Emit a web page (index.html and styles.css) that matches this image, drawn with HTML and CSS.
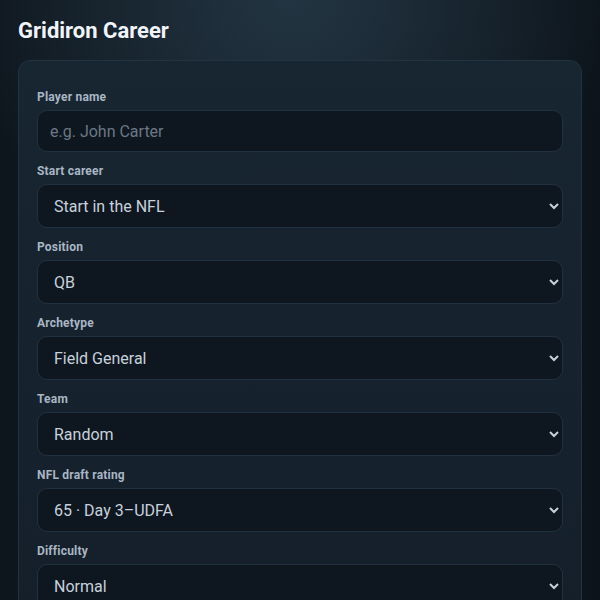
FILE: index.html
```html
<!DOCTYPE html>
<html lang="en">
<head>
<meta charset="utf-8">
<title>Gridiron Career</title>
<link rel="stylesheet" href="styles.css">
</head>
<body>
<h1 class="title">Gridiron Career</h1>
<form class="card">
  <div class="field">
    <label class="label" for="name">Player name</label>
    <input class="control input" id="name" type="text" placeholder="e.g. John Carter">
  </div>
  <div class="field">
    <label class="label" for="start">Start career</label>
    <select class="control select" id="start"><option>Start in the NFL</option><option>Start in College</option></select>
  </div>
  <div class="field">
    <label class="label" for="pos">Position</label>
    <select class="control select" id="pos"><option>QB</option><option>RB</option><option>WR</option></select>
  </div>
  <div class="field">
    <label class="label" for="arch">Archetype</label>
    <select class="control select" id="arch"><option>Field General</option><option>Scrambler</option></select>
  </div>
  <div class="field">
    <label class="label" for="team">Team</label>
    <select class="control select" id="team"><option>Random</option></select>
  </div>
  <div class="field">
    <label class="label" for="draft">NFL draft rating</label>
    <select class="control select" id="draft"><option>65 · Day 3–UDFA</option></select>
  </div>
  <div class="field">
    <label class="label" for="diff">Difficulty</label>
    <select class="control select" id="diff"><option>Normal</option><option>Hard</option></select>
  </div>
</form>
</body>
</html>
```
FILE: styles.css
```css
html {
  background: #0d141b;
  color-scheme: dark;
}
body {
  margin: 0;
  padding: 0 18px 40px;
  min-height: 100vh;
  font-family: Roboto, "Liberation Sans", sans-serif;
  background:
    radial-gradient(ellipse 340px 260px at 290px 0px, rgba(40, 60, 74, 0.75), rgba(40, 60, 74, 0) 100%),
    linear-gradient(90deg, #0e161d 0%, #121d27 50%, #0c131a 100%);
  color: #e8eef4;
}
.title {
  margin: 0;
  padding: 18px 0 17px;
  font-size: 22px;
  line-height: 25px;
  font-weight: 700;
  letter-spacing: 0;
  color: #f1f5f9;
}
.card {
  display: flex;
  flex-direction: column;
  gap: 11px;
  padding: 28px 18px 18px;
  border: 1px solid #223240;
  border-radius: 12px;
  background: linear-gradient(180deg, #182632 0%, #141f2a 100%);
}
.field {
  display: flex;
  flex-direction: column;
  gap: 5px;
}
.label {
  font-size: 12px;
  line-height: 16px;
  font-weight: 700;
  letter-spacing: 0.2px;
  color: #a9b6c3;
}
.control {
  box-sizing: border-box;
  width: 100%;
  margin: 0;
  padding: 0 12px;
  border: 1px solid #223140;
  border-radius: 10px;
  background-color: #0e1720;
  color: #c7d1db;
  font-family: Roboto, "Liberation Sans", sans-serif;
  font-size: 16px;
}
.input {
  height: 42px;
}
.input::placeholder {
  color: #6c7884;
}
.select {
  height: 44px;
}
```
